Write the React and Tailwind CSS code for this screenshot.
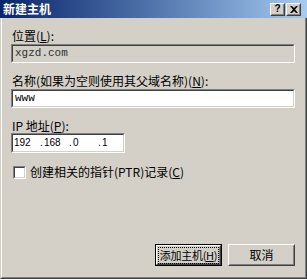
const FONT = { fontFamily: '"Noto Sans CJK SC", "Liberation Sans", sans-serif' };

// raised 3D edge used by classic buttons
function Raised({ className = '', children }) {
    return (
        <div className={`border border-t-white border-l-white border-r-[#404040] border-b-[#404040] ${className}`}>
            <div className="w-full h-full border border-t-[#d4d0c8] border-l-[#d4d0c8] border-r-[#808080] border-b-[#808080] flex items-center justify-center">
                {children}
            </div>
        </div>
    );
}

// sunken edge used by edit boxes and checkboxes
function Sunken({ className = '', inner = 'bg-white', children }) {
    return (
        <div className={`border border-t-[#808080] border-l-[#808080] border-r-white border-b-white ${className}`}>
            <div className={`w-full h-full border border-t-[#404040] border-l-[#404040] border-r-[#d4d0c8] border-b-[#d4d0c8] flex items-center ${inner}`}>
                {children}
            </div>
        </div>
    );
}

function Label({ children, className = '' }) {
    return <div className={`h-[14px] leading-[14px] text-[12px] text-black whitespace-nowrap ${className}`}>{children}</div>;
}

const mono = { fontFamily: '"Liberation Mono", monospace' };
const sans = { fontFamily: '"Liberation Sans", sans-serif' };

export default function App() {
    return (
        <div className="w-[307px] h-[279px] flex flex-col bg-[#d4d0c8] overflow-hidden" style={FONT}>
            {/* Title bar */}
            <div className="h-[18px] flex items-center bg-linear-to-r from-[#0a246a] to-[#a6caf0] pl-[3px] pr-[6px]">
                <span className="text-white text-[12px] font-bold leading-none flex-1">新建主机</span>
                <div className="flex gap-[1px]">
                    <Raised className="w-[15px] h-[13px] bg-[#d4d0c8]">
                        <span className="text-[10px] font-bold leading-none text-black" style={sans}>?</span>
                    </Raised>
                    <Raised className="w-[15px] h-[13px] bg-[#d4d0c8]">
                        <svg width="8" height="7" viewBox="0 0 8 7">
                            <path d="M0 0h2l2 2 2-2h2L5 3.5 8 7H6L4 5 2 7H0l3-3.5z" fill="#000" />
                        </svg>
                    </Raised>
                </div>
            </div>

            {/* Body */}
            <div className="flex-1 flex flex-col border-l border-r border-b border-l-[#d4d0c8] border-r-[#404040] border-b-[#404040]">
                <div className="flex-1 flex flex-col border-l border-r border-b border-l-white border-r-[#808080] border-b-[#808080] pl-[9px] pr-[10px] pt-[11px] pb-[11px]">
                    <Label className="pl-[1px]">位置(<u>L</u>):</Label>
                    <Sunken className="mt-[1px] h-[19px] w-[284px]" inner="bg-[#d4d0c8]">
                        <span className="text-[11px] text-[#303030] pl-[2px] leading-none" style={mono}>xgzd.com</span>
                    </Sunken>

                    <Label className="mt-[11px] pl-[1px]">名称(如果为空则使用其父域名称)(<u>N</u>):</Label>
                    <Sunken className="mt-[1px] h-[19px] w-[284px]">
                        <span className="text-[11px] text-black pl-[2px] leading-none" style={mono}>www</span>
                    </Sunken>

                    <Label className="mt-[11px] pl-[1px]">IP 地址(<u>P</u>):</Label>
                    <Sunken className="h-[20px] w-[114px]">
                        <div className="flex items-center text-[10px] text-black leading-none pl-[1px]" style={sans}>
                            <span className="w-[26px]">192</span>
                            <span className="w-[4px]">.</span>
                            <span className="w-[25px]">168</span>
                            <span className="w-[4px]">.</span>
                            <span className="w-[25px]">0</span>
                            <span className="w-[4px]">.</span>
                            <span className="w-[20px]">1</span>
                        </div>
                    </Sunken>

                    <div className="mt-[12px] flex items-center gap-[4px] pl-[2px]">
                        <Sunken className="w-[13px] h-[13px]" />
                        <Label>创建相关的指针(PTR)记录(<u>C</u>)</Label>
                    </div>

                    <div className="flex-1" />

                    <div className="flex justify-end gap-[6px]">
                        <div className="border border-black w-[67px] h-[22px]">
                            <Raised className="w-full h-full">
                                <span className="text-[11px] text-black leading-none whitespace-nowrap tracking-[-0.3px] px-px py-[2px] border border-dotted border-black">
                                    添加主机(<u>H</u>)
                                </span>
                            </Raised>
                        </div>
                        <Raised className="w-[67px] h-[22px]">
                            <span className="text-[12px] text-black leading-none">取消</span>
                        </Raised>
                    </div>
                </div>
            </div>
        </div>
    );
}
